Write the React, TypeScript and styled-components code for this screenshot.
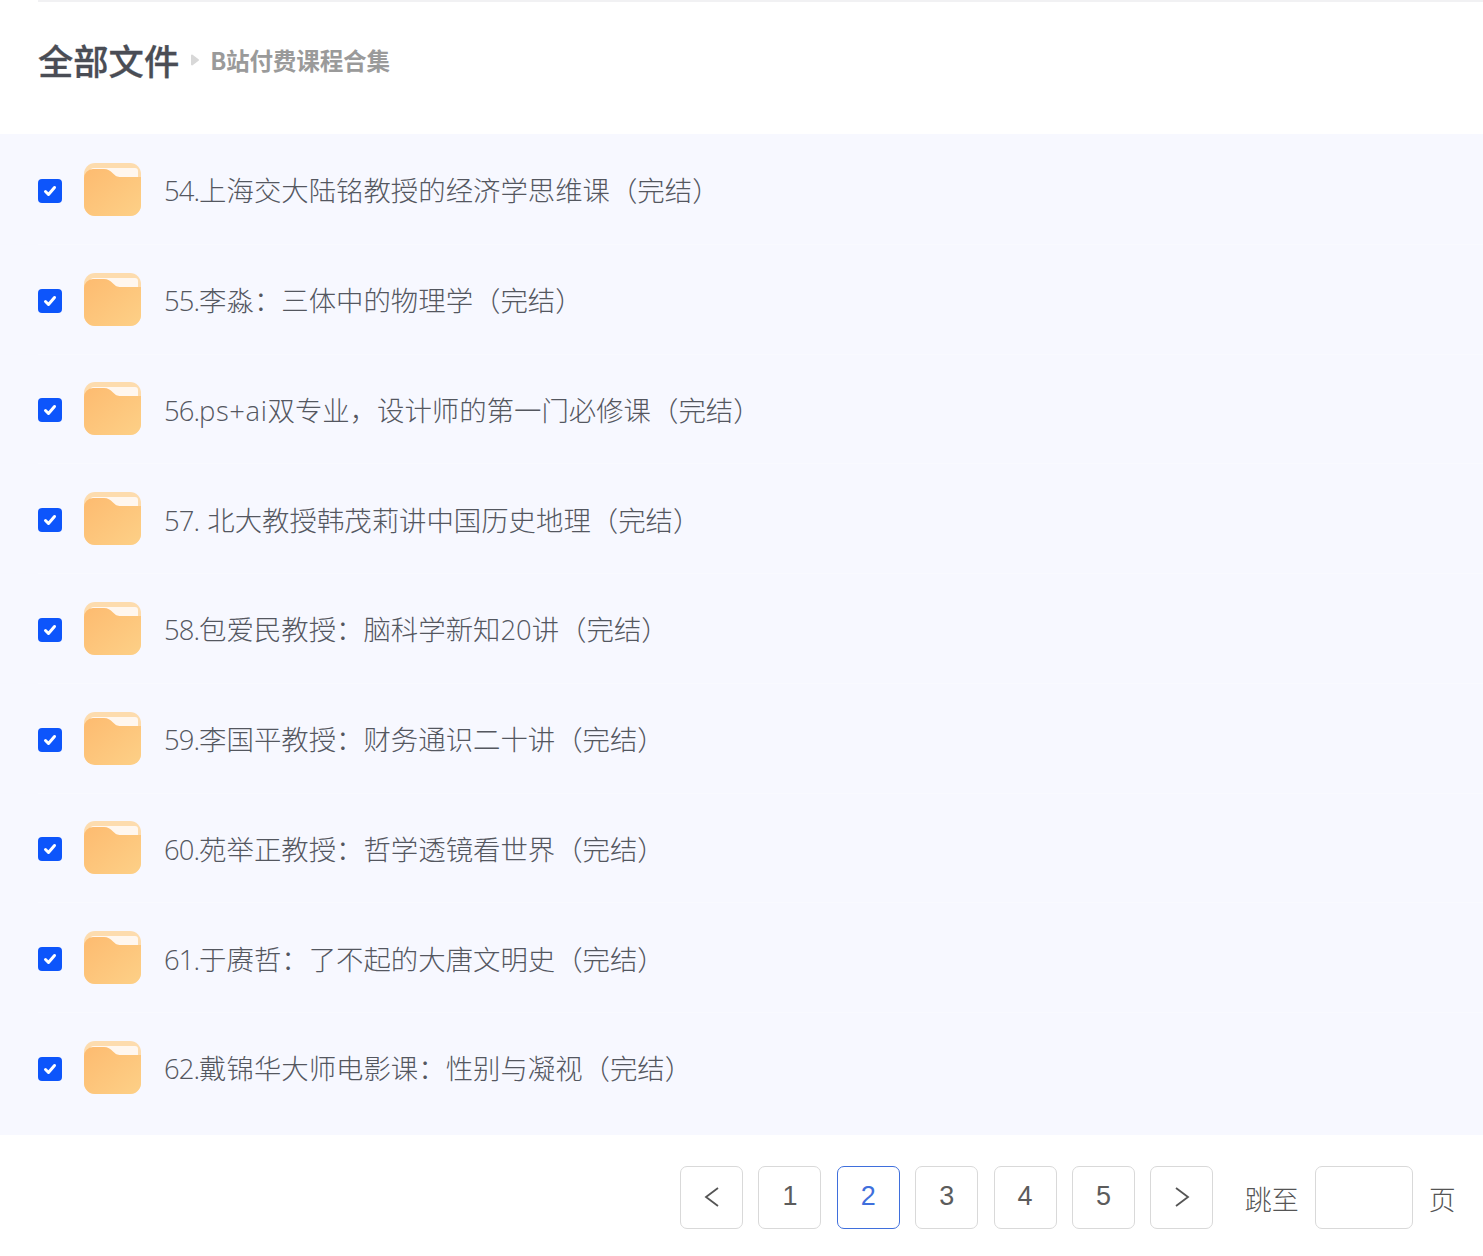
import React from "react";
import styled, { createGlobalStyle } from "styled-components";

const Global = createGlobalStyle`
  html, body { margin: 0; padding: 0; background: #fff; }
  body { font-family: "Open Sans", "Noto Sans CJK SC", sans-serif; }
`;

const Page = styled.div`
  width: 1483px;
  height: 1256px;
  overflow: hidden;
  display: flex;
  flex-direction: column;
`;

const Header = styled.header`
  height: 134px;
  box-sizing: border-box;
  margin-left: 38px;
  border-top: 2px solid #f1f1f3;
  padding-top: 36px;
  display: flex;
  align-items: flex-start;
`;

const Title = styled.h1`
  margin: 0;
  font-size: 35.3px;
  line-height: 44px;
  font-weight: 500;
  color: #4a4d55;
  font-family: "Noto Sans CJK SC", sans-serif;
  -webkit-text-stroke: 0.3px #4a4d55;
`;

const Crumb = styled.span`
  margin-left: 11px;
  margin-top: 15px;
  line-height: 0;
`;

const SubTitle = styled.span`
  margin-left: 10px;
  font-size: 23.6px;
  line-height: 44px;
  font-weight: 700;
  color: #9a9a9a;
  font-family: "Noto Sans CJK SC", sans-serif;
  letter-spacing: -0.2px;
`;

const List = styled.ul`
  margin: 0;
  padding: 0;
  list-style: none;
  height: 1001px;
  box-sizing: border-box;
  background: #f7f8ff;
`;

const Row = styled.li`
  height: 109.75px;
  box-sizing: border-box;
  margin-left: 38px;
  padding-top: 3px;
  border-top: 1px solid #f9faff;
  display: flex;
  align-items: center;
  &:first-child { border-top-color: transparent; }
`;

const Check = styled.span`
  width: 24px;
  height: 24px;
  border-radius: 4px;
  background: #0d55fb;
  display: flex;
  align-items: center;
  justify-content: center;
  flex: none;
`;

const FolderBox = styled.span`
  margin-left: 22px;
  margin-top: -2px;
  width: 57px;
  height: 54px;
  flex: none;
  display: block;
  line-height: 0;
`;

const Name = styled.span`
  margin-left: 23px;
  margin-top: -3px;
  font-size: 27.4px;
  font-weight: 300;
  color: #54575f;
  white-space: pre;
`;

const Index = styled.span`
  letter-spacing: -0.9px;
  word-spacing: 2px;
`;

const Latin = styled.span<{ $wide?: boolean }>`
  letter-spacing: ${(p) => (p.$wide ? "0.6px" : "0")};
`;

const Pager = styled.nav`
  flex: 1;
  display: flex;
  align-items: flex-start;
  padding: 31px 0 0 680px;
`;

const PageBtn = styled.button<{ $active?: boolean }>`
  width: 63px;
  height: 63px;
  margin-right: 15.4px;
  padding: 0 0 3px;
  box-sizing: border-box;
  background: #fff;
  border: 1px solid ${(p) => (p.$active ? "#3f6fdc" : "#d9d9d9")};
  border-radius: 7px;
  font-family: "Liberation Sans", Arial, sans-serif;
  font-size: 27px;
  color: ${(p) => (p.$active ? "#3f6fdc" : "#5c5c5c")};
  display: flex;
  align-items: center;
  justify-content: center;
`;

const JumpLabel = styled.span<{ $lead?: boolean }>`
  font-family: "Noto Sans CJK SC", sans-serif;
  font-size: 27px;
  font-weight: 300;
  color: #555;
  line-height: 66px;
  margin-left: ${(p) => (p.$lead ? "16px" : "0")};
`;

const JumpInput = styled.span`
  width: 98px;
  height: 63px;
  box-sizing: border-box;
  margin: 0 16px;
  border: 1px solid #d9d9d9;
  border-radius: 7px;
  background: #fff;
`;

const names = [
  "54.上海交大陆铭教授的经济学思维课（完结）",
  "55.李淼：三体中的物理学（完结）",
  "56.ps+ai双专业，设计师的第一门必修课（完结）",
  "57. 北大教授韩茂莉讲中国历史地理（完结）",
  "58.包爱民教授：脑科学新知20讲（完结）",
  "59.李国平教授：财务通识二十讲（完结）",
  "60.苑举正教授：哲学透镜看世界（完结）",
  "61.于赓哲：了不起的大唐文明史（完结）",
  "62.戴锦华大师电影课：性别与凝视（完结）",
];

const Folder = () => (
  <svg width="57" height="54" viewBox="0 0 57 54">
    <defs>
      <linearGradient id="fg" x1="0" y1="0" x2="1" y2="1">
        <stop offset="0" stopColor="#fdbb70" />
        <stop offset="1" stopColor="#fdd087" />
      </linearGradient>
    </defs>
    <rect x="0" y="0" width="57" height="53" rx="11" fill="#fddcae" />
    <path d="M6 16V9a4 4 0 0 1 4-4h41a3 3 0 0 1 3 3v10H6z" fill="#fff7ef" />
    <path
      d="M0 15a9 9 0 0 1 9-9h11c4 0 6 1.500 9 4.500c2.500 2.500 4 3.500 8 3.500h20v28a11 11 0 0 1-11 11H11a11 11 0 0 1-11-11z"
      fill="url(#fg)"
    />
  </svg>
);

const Tick = () => (
  <svg width="14" height="14" viewBox="0 0 14 14">
    <path d="M2.500 7.500l3 3 6-7" fill="none" stroke="#fff" strokeWidth="3" strokeLinecap="round" strokeLinejoin="round" />
  </svg>
);

const Arrow = ({ dir }: { dir: "l" | "r" }) => (
  <svg width="16" height="22" viewBox="0 0 16 22" style={{ marginTop: 2 }}>
    <path d={dir === "l" ? "M14 2L2 11l12 9" : "M2 2l12 9-12 9"} fill="none" stroke="#555" strokeWidth="1.800" />
  </svg>
);

const CrumbArrow = () => (
  <svg width="10" height="14" viewBox="0 0 10 14">
    <path d="M2 2.500L8 7l-6 4.500z" fill="#d8d8d8" stroke="#d8d8d8" strokeWidth="2" strokeLinejoin="round" />
  </svg>
);

const renderName = (n: string) => {
  const m = n.match(/^(\d+\.\s?)(.*)$/);
  const index = m ? m[1] : "";
  const rest = m ? m[2] : n;
  return (
    <>
      <Index>{index}</Index>
      {rest.split(/([0-9a-z+]+)/).map((part, i) =>
        i % 2 === 1 ? (
          <Latin key={i} $wide={/[a-z]/.test(part)}>{part}</Latin>
        ) : (
          part
        )
      )}
    </>
  );
};

export default function App() {
  return (
    <Page>
      <Global />
      <Header>
        <Title>全部文件</Title>
        <Crumb><CrumbArrow /></Crumb>
        <SubTitle>B站付费课程合集</SubTitle>
      </Header>
      <List>
        {names.map((n) => (
          <Row key={n}>
            <Check><Tick /></Check>
            <FolderBox><Folder /></FolderBox>
            <Name>{renderName(n)}</Name>
          </Row>
        ))}
      </List>
      <Pager>
        <PageBtn><Arrow dir="l" /></PageBtn>
        <PageBtn>1</PageBtn>
        <PageBtn $active>2</PageBtn>
        <PageBtn>3</PageBtn>
        <PageBtn>4</PageBtn>
        <PageBtn>5</PageBtn>
        <PageBtn><Arrow dir="r" /></PageBtn>
        <JumpLabel $lead>跳至</JumpLabel>
        <JumpInput />
        <JumpLabel>页</JumpLabel>
      </Pager>
    </Page>
  );
}
